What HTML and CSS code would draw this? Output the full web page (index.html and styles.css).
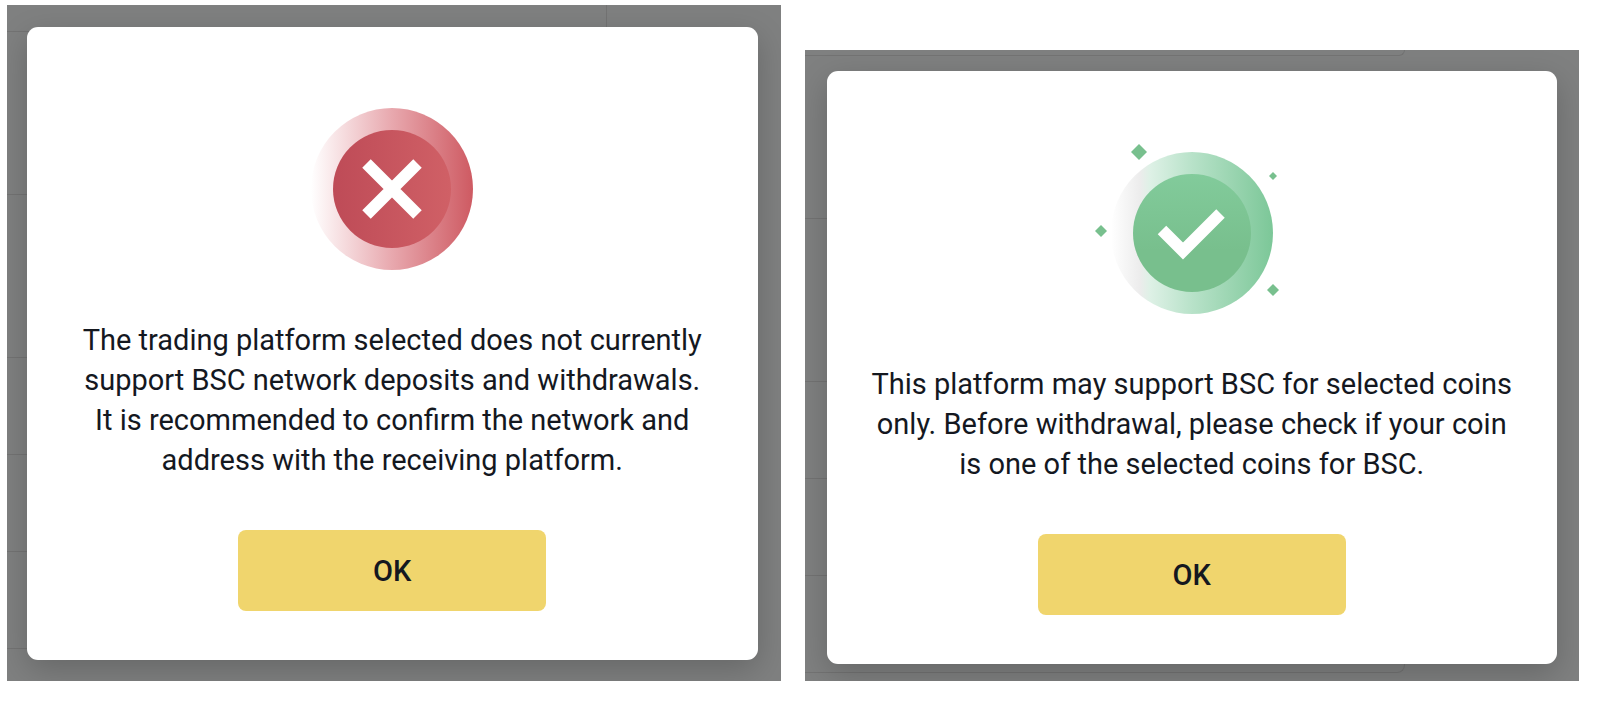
FILE: index.html
```
<!DOCTYPE html>
<html lang="en">
<head>
    <meta charset="UTF-8">
    <meta name="viewport" content="width=device-width, initial-scale=1.0">
    <title>BSC network support</title>
    <link rel="stylesheet" href="styles.css">
</head>
<body>
<main class="panels">
    <section class="panel panel-error">
        <!-- Dimmed list behind the dialog -->
        <div class="backdrop">
            <div class="row row-first"></div>
            <div class="row row-tall"></div>
            <div class="row row-tall"></div>
            <div class="row"></div>
            <div class="row"></div>
            <div class="row"></div>
        </div>
        <div class="modal" role="dialog" aria-labelledby="error-text">
            <svg class="modal-icon" viewBox="0 0 222 200" aria-hidden="true">
                <defs>
                    <linearGradient id="errorRing" x1="0" y1="0" x2="1" y2="0">
                        <stop offset="0" stop-color="#ffffff"/>
                        <stop offset="0.5" stop-color="#e8a8ae"/>
                        <stop offset="1" stop-color="#ce5a62"/>
                    </linearGradient>
                    <linearGradient id="errorDisc" x1="0" y1="0" x2="1" y2="0">
                        <stop offset="0" stop-color="#be4b57"/>
                        <stop offset="1" stop-color="#d06066"/>
                    </linearGradient>
                </defs>
                <circle cx="111" cy="103" r="81" fill="url(#errorRing)"/>
                <circle cx="111" cy="103" r="59" fill="url(#errorDisc)"/>
                <path d="M85.500 77.500L136.500 128.500M136.500 77.500L85.500 128.500" stroke="#fff" stroke-width="12"/>
            </svg>
            <p class="modal-text" id="error-text">
                The trading platform selected does not currently<br>
                support BSC network deposits and withdrawals.<br>
                It is recommended to confirm the network and<br>
                address with the receiving platform.
            </p>
            <button class="modal-button" type="button">OK</button>
        </div>
    </section>

    <section class="panel panel-success">
        <div class="backdrop">
            <div class="row row-end"></div>
            <div class="row row-tall"></div>
            <div class="row row-tall"></div>
            <div class="row"></div>
            <div class="row"></div>
            <div class="row row-last"></div>
        </div>
        <div class="modal" role="dialog" aria-labelledby="success-text">
            <svg class="modal-icon" viewBox="0 0 222 200" aria-hidden="true">
                <defs>
                    <linearGradient id="successRing" x1="0" y1="0" x2="1" y2="0">
                        <stop offset="0" stop-color="#ffffff"/>
                        <stop offset="0.18" stop-color="#ececec"/>
                        <stop offset="0.24" stop-color="#def1e6"/>
                        <stop offset="0.5" stop-color="#b8e2c9"/>
                        <stop offset="1" stop-color="#7cc798"/>
                    </linearGradient>
                    <linearGradient id="successDisc" x1="0" y1="0" x2="0" y2="1">
                        <stop offset="0" stop-color="#82cb9b"/>
                        <stop offset="0.65" stop-color="#78bf8d"/>
                        <stop offset="1" stop-color="#78bf8d"/>
                    </linearGradient>
                </defs>
                <circle cx="111" cy="103" r="81" fill="url(#successRing)"/>
                <circle cx="111" cy="103" r="59" fill="url(#successDisc)"/>
                <path d="M81 100L102 121L139.500 83.500" fill="none" stroke="#fff" stroke-width="12"/>
                <g fill="#78c08e">
                    <path d="M58 14l8 8-8 8-8-8z"/>
                    <path d="M20 95l6 6-6 6-6-6z"/>
                    <path d="M192 42l4 4-4 4-4-4z"/>
                    <path d="M192 154l6 6-6 6-6-6z"/>
                </g>
            </svg>
            <p class="modal-text" id="success-text">
                This platform may support BSC for selected coins<br>
                only. Before withdrawal, please check if your coin<br>
                is one of the selected coins for BSC.
            </p>
            <button class="modal-button" type="button">OK</button>
        </div>
    </section>
</main>
</body>
</html>
```
FILE: styles.css
```
* {
    box-sizing: border-box;
}

body {
    margin: 0;
    background-color: #ffffff;
    color: #14181f;
    font-family: Roboto, "Liberation Sans", sans-serif;
}

.panels {
    display: flex;
    align-items: flex-end;
    gap: 24px;
    padding: 5px 21px 21px 7px;
}

.panel {
    position: relative;
    flex: 1;
    overflow: hidden;
    background-color: #7f8080;
}

.panel-error {
    padding: 22px 23px 21px 20px;
}

.panel-success {
    padding: 21px 22px 17px 22px;
}

/* Sits behind the modal */
.backdrop {
    position: absolute;
    top: 0;
    left: 0;
    width: 600px;
}

.row {
    height: 97px;
    border-bottom: 1px solid #737373;
}

.row-tall {
    height: 163px;
}

.row-first {
    height: 27px;
    border-right: 1px solid #737373;
}

.row-end {
    height: 6px;
    border-right: 1px solid #737373;
    border-radius: 0 0 8px 0;
}

.row-last {
    border-right: 1px solid #737373;
    border-radius: 0 0 8px 0;
}

.modal {
    position: relative;
    display: flex;
    flex-direction: column;
    align-items: center;
    padding: 59px 24px 49px;
    border-radius: 11px;
    background-color: #ffffff;
    box-shadow: 0 10px 32px rgba(0, 0, 0, 0.2);
}

.modal-icon {
    width: 222px;
    height: 200px;
}

.modal-text {
    margin: 34px 0 50px;
    font-size: 29px;
    line-height: 40px;
    text-align: center;
}

.modal-button {
    width: 308px;
    max-width: 100%;
    height: 81px;
    border: none;
    border-radius: 8px;
    background-color: #f0d56d;
    color: #14181f;
    font-family: inherit;
    font-size: 29px;
    font-weight: 500;
    cursor: pointer;
}

/* Responsive */
@media only screen and (max-width: 1200px) {
    .panels {
        flex-direction: column;
        align-items: stretch;
    }
}
```
